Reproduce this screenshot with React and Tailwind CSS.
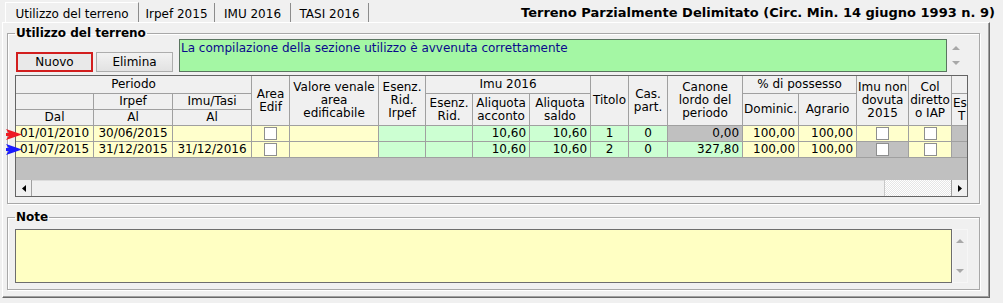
import React from "react";

function Check() {
  return <span className="inline-block w-[13px] h-[13px] border border-[#8e8f8f] bg-white align-middle" />;
}

function Arrow({ color }) {
  return (
    <svg width="16" height="11" viewBox="0 0 16 11">
      <path d="M0 0 L16 5.5 L0 11 L3.5 5.5 Z" fill={color} />
      <path d="M0 5.5 H12" stroke={color} strokeWidth="3" />
    </svg>
  );
}

function UpTri() {
  return (
    <svg width="8" height="5" viewBox="0 0 8 5">
      <path d="M0 5 L4 1 L8 5 Z" fill="#a8a8a8" />
    </svg>
  );
}
function DownTri() {
  return (
    <svg width="8" height="5" viewBox="0 0 8 5">
      <path d="M0 0 L8 0 L4 4 Z" fill="#a8a8a8" />
    </svg>
  );
}

const H = "border-r border-b border-[#a0a0a0] bg-[#f0f0f0] text-center align-middle leading-[13px] p-0 whitespace-nowrap overflow-hidden";
const Y = "border-r border-b border-[#a0a0a0] bg-[#ffffcc] p-0 align-middle overflow-hidden whitespace-nowrap";
const G = "border-r border-b border-[#a0a0a0] bg-[#ccffd2] p-0 align-middle overflow-hidden whitespace-nowrap";
const S = "border-r border-b border-[#a0a0a0] bg-[#c0c0c0] p-0 align-middle overflow-hidden whitespace-nowrap";

export default function App() {
  return (
    <div className="w-[1003px] h-[303px] bg-[#f0f0f0] overflow-hidden text-[12px] text-black font-['DejaVu_Sans',sans-serif]">
      {/* Tab strip */}
      <div className="h-[22px] flex">
        <div className="ml-[5px] mt-[2px] h-[20px] w-[134px] flex items-center justify-center pt-[3px] border-l border-r border-t border-l-[#ffffff] border-t-[#ffffff] border-r-[#8c8c8c] bg-[#f0f0f0]">
          Utilizzo del terreno
        </div>
        <div className="mt-[3px] h-[19px] w-[76px] flex items-center justify-center pt-[2px] border-r border-[#8c8c8c]">
          Irpef 2015
        </div>
        <div className="mt-[3px] h-[19px] w-[76px] flex items-center justify-center pt-[2px] border-r border-[#8c8c8c]">
          IMU 2016
        </div>
        <div className="mt-[3px] h-[19px] w-[78px] flex items-center justify-center pt-[2px] border-r border-[#8c8c8c]">
          TASI 2016
        </div>
        <div className="ml-auto mr-[8px] mt-[5px] font-bold text-[13px] leading-[16px]">
          Terreno Parzialmente Delimitato (Circ. Min. 14 giugno 1993 n. 9)
        </div>
      </div>

      {/* Page */}
      <div className="ml-[2px] w-[988px] h-[276px] border-l border-t border-l-[#ffffff] border-t-[#ffffff] border-r border-b border-r-[#696969] border-b-[#696969] shadow-[inset_-1px_-1px_0_#a0a0a0]">
        {/* Group 1 */}
        <fieldset className="ml-[4px] mt-[3px] w-[973px] border border-[#a8a8a8] shadow-[inset_1px_1px_0_#ffffff,1px_1px_0_#ffffff] pb-[6px]">
          <legend className="ml-[7px] px-[1px] font-bold leading-[14px]">Utilizzo del terreno</legend>
          <div className="-mt-[1px] flex items-end h-[33px]">
            <button className="ml-[8px] w-[77px] h-[20px] border-2 border-[#d21e1e] bg-[#e9e9e9] leading-[16px] text-center">
              Nuovo
            </button>
            <button className="ml-[3px] w-[77px] h-[20px] border border-[#adadad] bg-[linear-gradient(#f2f2f2,#e2e2e2)] leading-[18px] text-center">
              Elimina
            </button>
            <div className="ml-[6px] w-[768px] h-[33px] border border-[#5a7560] bg-[#a4f7a4] text-[#0a0a8c] leading-[14px] pl-[1px] pt-[1px]">
              La compilazione della sezione utilizzo è avvenuta correttamente
            </div>
            <div className="w-[17px] h-[33px] flex flex-col items-center justify-between py-[6px]">
              <UpTri />
              <DownTri />
            </div>
          </div>

          {/* Grid */}
          <div className="relative ml-[7px] mt-[3px] w-[953px] h-[122px] border border-[#646464] bg-[#c0c0c0] flex flex-col">
            <div className="h-[104px] overflow-hidden">
              <table className="table-fixed border-separate border-spacing-0 w-[951px]">
                <colgroup>
                  <col className="w-[78px]" />
                  <col className="w-[79px]" />
                  <col className="w-[79px]" />
                  <col className="w-[38px]" />
                  <col className="w-[89px]" />
                  <col className="w-[47px]" />
                  <col className="w-[47px]" />
                  <col className="w-[57px]" />
                  <col className="w-[61px]" />
                  <col className="w-[38px]" />
                  <col className="w-[39px]" />
                  <col className="w-[75px]" />
                  <col className="w-[56px]" />
                  <col className="w-[58px]" />
                  <col className="w-[52px]" />
                  <col className="w-[43px]" />
                  <col className="w-[15px]" />
                </colgroup>
                <tbody>
                  <tr className="h-[18px]">
                    <td colSpan={3} className={H}>Periodo</td>
                    <td rowSpan={3} className={H}>Area<br />Edif</td>
                    <td rowSpan={3} className={H}>Valore venale<br />area<br />edificabile</td>
                    <td rowSpan={3} className={H}>Esenz.<br />Rid.<br />Irpef</td>
                    <td colSpan={3} className={H}>Imu 2016</td>
                    <td rowSpan={3} className={H}>Titolo</td>
                    <td rowSpan={3} className={H}>Cas.<br />part.</td>
                    <td rowSpan={3} className={H}>Canone<br />lordo del<br />periodo</td>
                    <td colSpan={2} className={H}>% di possesso</td>
                    <td rowSpan={3} className={H}>Imu non<br />dovuta<br />2015</td>
                    <td rowSpan={3} className={H}>Col<br />diretto<br />o IAP</td>
                    <td className={H + " border-r-0"}></td>
                  </tr>
                  <tr className="h-[16px]">
                    <td className={H}></td>
                    <td className={H}>Irpef</td>
                    <td className={H}>Imu/Tasi</td>
                    <td rowSpan={2} className={H}>Esenz.<br />Rid.</td>
                    <td rowSpan={2} className={H}>Aliquota<br />acconto</td>
                    <td rowSpan={2} className={H}>Aliquota<br />saldo</td>
                    <td rowSpan={2} className={H}>Dominic.</td>
                    <td rowSpan={2} className={H}>Agrario</td>
                    <td rowSpan={2} className={H + " border-r-0 text-left"}>
                      <div className="pl-[1px]">Es</div>
                      <div className="pl-[6px]">T</div>
                    </td>
                  </tr>
                  <tr className="h-[16px]">
                    <td className={H}>Dal</td>
                    <td className={H}>Al</td>
                    <td className={H}>Al</td>
                  </tr>
                  <tr className="h-[16px] leading-[15px]">
                    <td className={Y + " text-center"}>01/01/2010</td>
                    <td className={Y + " text-center"}>30/06/2015</td>
                    <td className={Y}></td>
                    <td className={Y + " text-center"}><Check /></td>
                    <td className={Y}></td>
                    <td className={G}></td>
                    <td className={G}></td>
                    <td className={G + " text-right pr-[3px]"}>10,60</td>
                    <td className={G + " text-right pr-[3px]"}>10,60</td>
                    <td className={G + " text-center"}>1</td>
                    <td className={G + " text-center"}>0</td>
                    <td className={S + " text-right pr-[3px]"}>0,00</td>
                    <td className={Y + " text-right pr-[3px]"}>100,00</td>
                    <td className={Y + " text-right pr-[3px]"}>100,00</td>
                    <td className={Y + " text-center"}><Check /></td>
                    <td className={Y + " text-center"}><Check /></td>
                    <td className={S + " border-r-0"}></td>
                  </tr>
                  <tr className="h-[16px] leading-[15px]">
                    <td className={Y + " text-center"}>01/07/2015</td>
                    <td className={Y + " text-center"}>31/12/2015</td>
                    <td className={Y + " text-center"}>31/12/2016</td>
                    <td className={Y + " text-center"}><Check /></td>
                    <td className={Y}></td>
                    <td className={G}></td>
                    <td className={G}></td>
                    <td className={G + " text-right pr-[3px]"}>10,60</td>
                    <td className={G + " text-right pr-[3px]"}>10,60</td>
                    <td className={G + " text-center"}>2</td>
                    <td className={G + " text-center"}>0</td>
                    <td className={G + " text-right pr-[3px]"}>327,80</td>
                    <td className={Y + " text-right pr-[3px]"}>100,00</td>
                    <td className={Y + " text-right pr-[3px]"}>100,00</td>
                    <td className={S + " text-center"}><Check /></td>
                    <td className={Y + " text-center"}><Check /></td>
                    <td className={S + " border-r-0"}></td>
                  </tr>
                </tbody>
              </table>
            </div>
            {/* horizontal scrollbar */}
            <div className="mt-auto h-[16px] flex bg-[#f0f0f0]">
              <div className="w-[16px] h-[16px] flex items-center justify-center border-r border-[#a0a0a0] bg-[#f0f0f0]">
                <svg width="4" height="7" viewBox="0 0 4 7"><path d="M4 0 L0 3.5 L4 7 Z" fill="#000" /></svg>
              </div>
              <div className="flex-1 bg-[#f0f0f0] border-t border-[#dcdcdc]" />
              <div className="w-[67px] bg-[repeating-conic-gradient(#ffffff_0_25%,#e6e6e6_0_50%)] bg-[length:2px_2px] border-l border-[#c8c8c8]" />
              <div className="w-[16px] h-[16px] flex items-center justify-center border-l border-[#a0a0a0] bg-[#f0f0f0]">
                <svg width="4" height="7" viewBox="0 0 4 7"><path d="M0 0 L4 3.5 L0 7 Z" fill="#000" /></svg>
              </div>
            </div>
            {/* row indicators */}
            <div className="absolute left-[-10px] top-[53px]"><Arrow color="#ee1c24" /></div>
            <div className="absolute left-[-10px] top-[68px]"><Arrow color="#1a1aff" /></div>
          </div>
        </fieldset>

        {/* Group 2 */}
        <fieldset className="ml-[4px] mt-[6px] w-[973px] border border-[#a8a8a8] shadow-[inset_1px_1px_0_#ffffff,1px_1px_0_#ffffff] pb-[6px]">
          <legend className="ml-[7px] px-[1px] font-bold leading-[14px]">Note</legend>
          <div className="mt-[5px] flex">
            <div className="ml-[7px] w-[937px] h-[54px] border border-[#6d6d6d] bg-[#ffffc3]" />
            <div className="w-[16px] h-[54px] flex flex-col items-center justify-between py-[8px] border border-[#f6f6f6]">
              <UpTri />
              <DownTri />
            </div>
          </div>
        </fieldset>
      </div>
    </div>
  );
}
